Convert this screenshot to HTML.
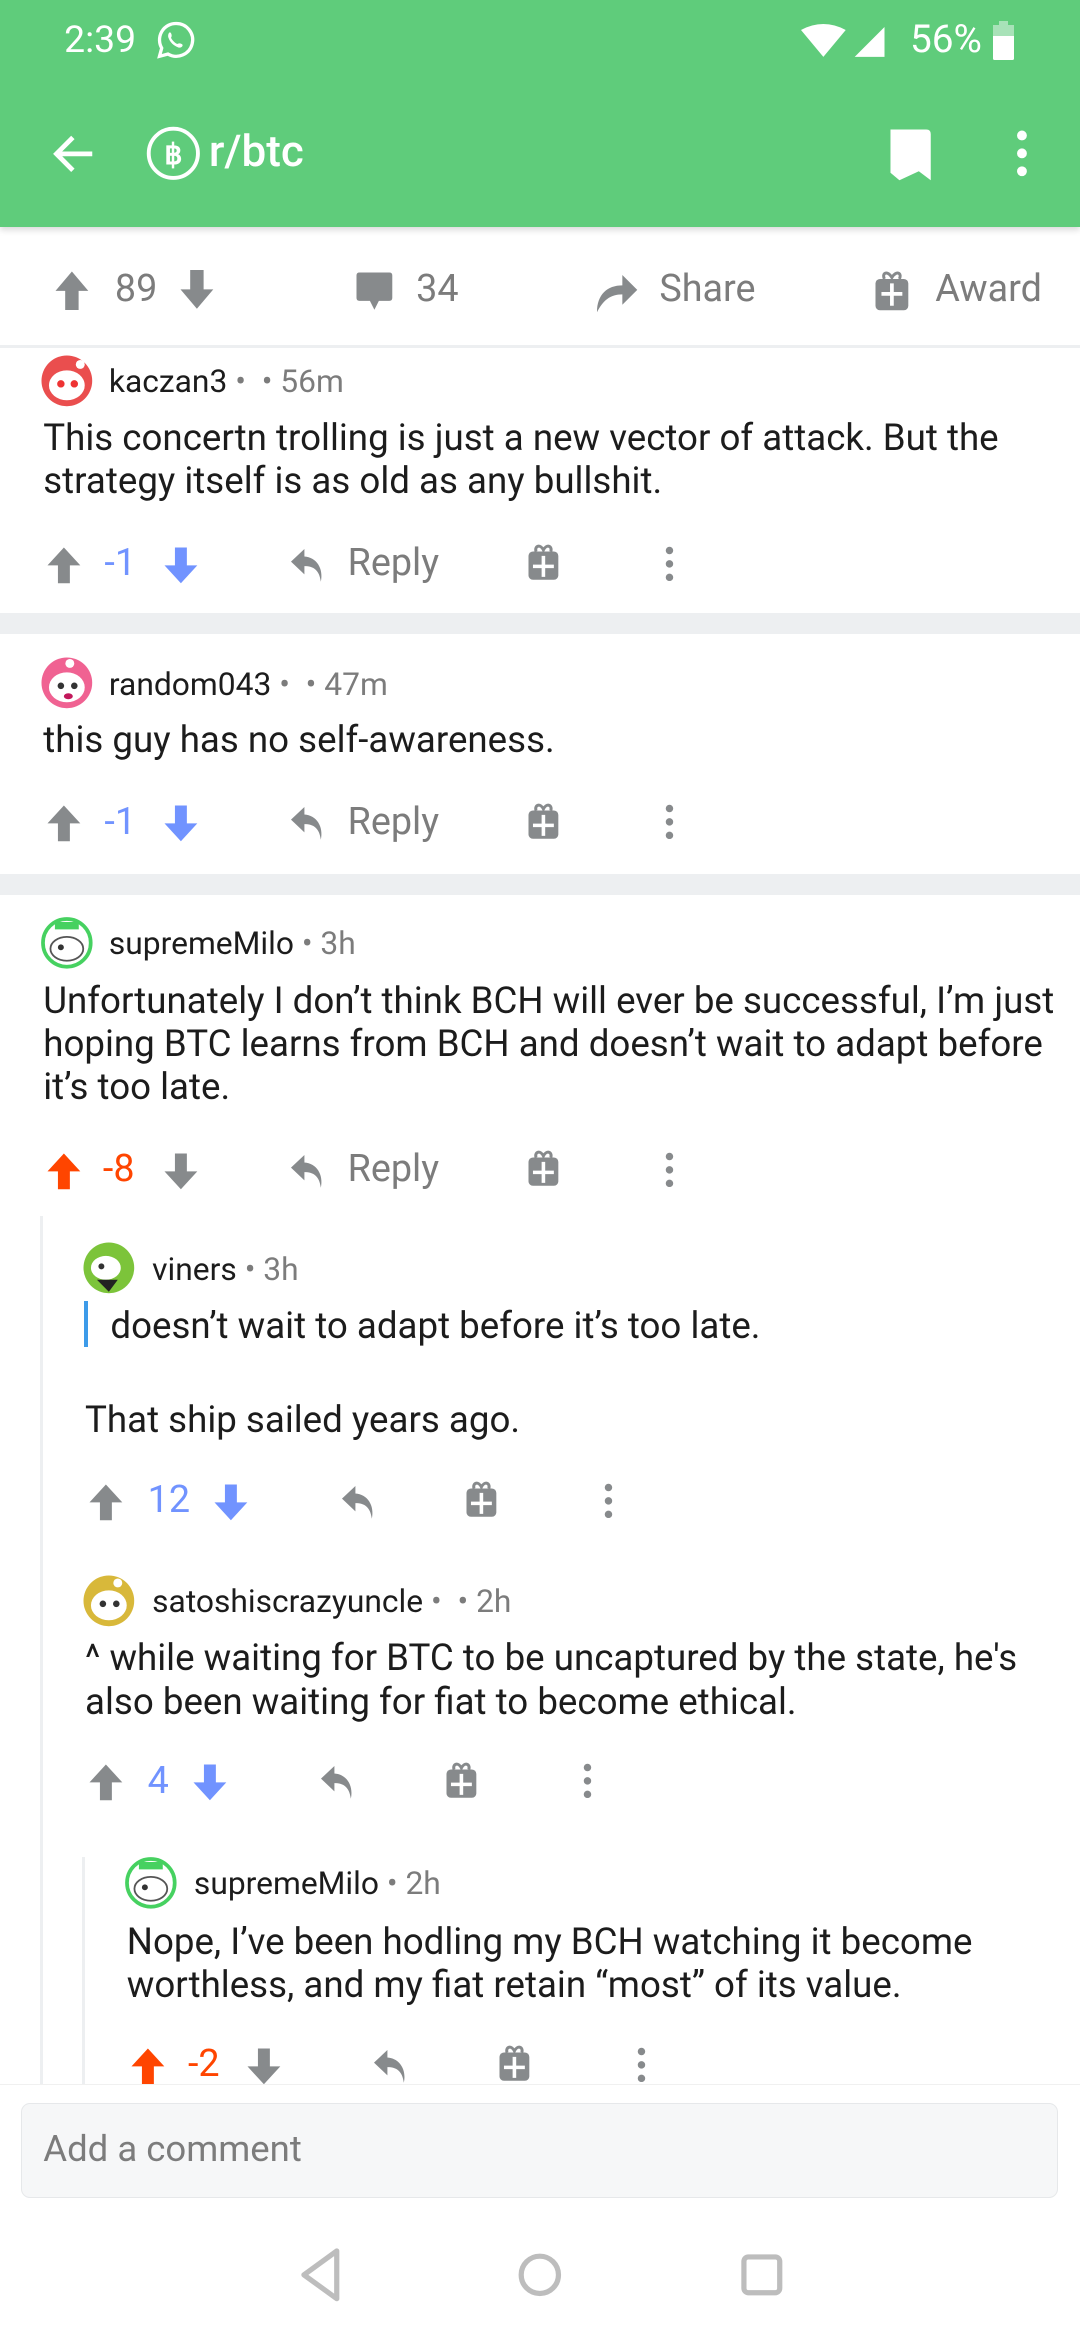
<!DOCTYPE html>
<html><head><meta charset="utf-8">
<style>
html,body{margin:0;padding:0;background:#fff;}
#w{position:relative;width:724px;height:1568px;zoom:1.49171;overflow:hidden;font-family:"Roboto","Liberation Sans",sans-serif;background:#fff;}
.a{position:absolute;white-space:nowrap;}
.t{position:absolute;font-size:24.6px;color:#1c1c1c;line-height:29px;white-space:nowrap;}
.n{position:absolute;font-size:21.3px;color:#1c1c1c;line-height:24px;white-space:nowrap;}
.n span{color:#7c7c7c;}
svg{position:absolute;}
.lab{position:absolute;font-size:25.3px;line-height:30px;color:#7c7c7c;white-space:nowrap;}
</style></head><body><div id="w">
<!-- header -->
<div class="a" style="left:0;top:0;width:724px;height:152px;background:#5fcc7b;box-shadow:0 2px 4px rgba(0,0,0,.15)"></div>
<div class="a" style="left:43px;top:12px;font-size:25px;color:#fff;line-height:30px">2:39</div>
<svg style="left:104px;top:13px" width="28" height="28" viewBox="0 0 28 28"><path d="M14 3a11 11 0 0 0-9.5 16.5L3 25l5.7-1.5A11 11 0 1 0 14 3z" fill="none" stroke="#fff" stroke-width="2.2"/><path d="M10 9c1 0 1.5 2.5 1 3 -.5.5 0 1.5 1.5 3s2.5 2 3 1.5c.5-.5 3 0 3 1 0 1.5-2 2-3 1.5-3-1-5.5-3.5-6.5-6.5-.5-1 0-3.5 1-3.5z" fill="#fff"/></svg>
<svg style="left:535px;top:16px" width="80" height="24" viewBox="0 0 80 24"><path d="M2 4Q17-4 32 4L17 22Z" fill="#fff"/><path d="M38 22L58 2V22Z" fill="#fff"/></svg>
<div class="a" style="left:610px;top:12px;font-size:26px;color:#fff;line-height:30px">56%</div>
<div class="a" style="left:666px;top:17px;width:14px;height:23px;background:#fff;border-radius:1px"></div>
<div class="a" style="left:666px;top:17px;width:14px;height:7px;background:#a8e2b8"></div>
<div class="a" style="left:670px;top:14px;width:6px;height:4px;background:#a8e2b8"></div>
<svg style="left:33px;top:87px" width="32" height="32" viewBox="0 0 32 32"><path d="M29 16H5M16 5L5 16l11 11" fill="none" stroke="#fff" stroke-width="3.2"/></svg>
<svg style="left:97px;top:84px" width="38" height="38" viewBox="0 0 38 38"><circle cx="19" cy="19" r="16.5" fill="none" stroke="#fff" stroke-width="2.6"/><text x="19" y="26" font-size="19" font-weight="bold" fill="#fff" text-anchor="middle" font-family="Liberation Sans">฿</text></svg>
<div class="a" style="left:140px;top:84px;font-size:29.5px;color:#fff;line-height:36px;font-weight:500">r/btc</div>
<svg style="left:594px;top:86px" width="32" height="36" viewBox="0 0 32 36"><path d="M3 1H27Q30 1 30 4V35L22 29L9 35L3 30Z" fill="#fff"/></svg>
<svg style="left:679px;top:86px" width="12" height="34" viewBox="0 0 12 34"><circle cx="6" cy="5" r="3.3" fill="#fff"/><circle cx="6" cy="17" r="3.3" fill="#fff"/><circle cx="6" cy="29" r="3.3" fill="#fff"/></svg>

<!-- action bar -->
<svg style="left:36px;top:181px" width="24" height="27" viewBox="0 0 24 27"><path d="M12 1L23 14H16.5V27H7.5V14H1Z" fill="#878a8c"/></svg>
<div class="lab" style="left:77px;top:179px">89</div>
<svg style="left:120px;top:181px" width="24" height="27" viewBox="0 0 24 27"><path d="M12 26L23 13H16.5V0H7.5V13H1Z" fill="#878a8c"/></svg>
<svg style="left:238px;top:182px" width="26" height="27" viewBox="0 0 26 27"><path d="M3 1H23Q25 1 25 3V18Q25 20 23 20H16L13 26L10 20H3Q1 20 1 18V3Q1 1 3 1Z" fill="#878a8c"/></svg>
<div class="lab" style="left:279px;top:179px">34</div>
<svg style="left:398px;top:180px" width="30" height="30" viewBox="0 0 30 30"><path d="M2 29C2 17 9 11 19 11V4L29 14L19 24V17C11 17 6 21 2 29Z" fill="#878a8c"/></svg>
<div class="lab" style="left:442px;top:179px">Share</div>
<svg style="left:586px;top:181px" width="24" height="28" viewBox="0 0 24 28"><rect x="1" y="6" width="22" height="21" rx="3" fill="#878a8c"/><path d="M7 6C5 2 9 0 12 5 15 0 19 2 17 6" fill="none" stroke="#878a8c" stroke-width="2"/><path d="M12 9V24M5 16H19" stroke="#fff" stroke-width="2.5"/></svg>
<div class="lab" style="left:627px;top:179px">Award</div>
<div class="a" style="left:0;top:231px;width:724px;height:2px;background:#edeff1"></div>

<!-- comment 1 -->
<svg style="left:27px;top:237px" width="36" height="36" viewBox="0 0 36 36"><circle cx="18" cy="18" r="17" fill="#ea4e4e"/><ellipse cx="18" cy="21" rx="12" ry="10" fill="#fff"/><circle cx="14" cy="20" r="2.5" fill="#e33"/><circle cx="23" cy="20" r="2.5" fill="#e33"/><circle cx="27" cy="7" r="3" fill="#fff"/></svg>
<div class="n" style="left:73px;top:244px">kaczan3 <span>•&nbsp; • 56m</span></div>
<div class="t" style="left:29px;top:279px">This concertn trolling is just a new vector of attack. But the<br>strategy itself is as old as any bullshit.</div>

<!-- comment 2 -->
<div class="a" style="left:0;top:411px;width:724px;height:14px;background:#edeff1"></div>
<svg style="left:27px;top:440px" width="36" height="36" viewBox="0 0 36 36"><circle cx="18" cy="18" r="17" fill="#f06292"/><ellipse cx="18" cy="21" rx="12" ry="10" fill="#fff"/><circle cx="14" cy="20" r="2.2" fill="#333"/><circle cx="23" cy="20" r="2.2" fill="#333"/><ellipse cx="19" cy="27" rx="3" ry="2" fill="#c2185b"/><circle cx="20" cy="5" r="3" fill="#fff"/></svg>
<div class="n" style="left:73px;top:447px">random043 <span>•&nbsp; • 47m</span></div>
<div class="t" style="left:29px;top:481px">this guy has no self-awareness.</div>

<!-- comment 3 -->
<div class="a" style="left:0;top:586px;width:724px;height:14px;background:#edeff1"></div>
<svg style="left:27px;top:614px" width="36" height="36" viewBox="0 0 36 36"><circle cx="18" cy="18" r="16" fill="#fff" stroke="#46d160" stroke-width="2.5"/><ellipse cx="18" cy="22" rx="11" ry="8" fill="#fff" stroke="#555" stroke-width="1.2"/><circle cx="14" cy="21" r="2" fill="#333"/><path d="M10 4h16v5H10z" fill="#46d160"/></svg>
<div class="n" style="left:73px;top:621px">supremeMilo <span>• 3h</span></div>
<div class="t" style="left:29px;top:656px">Unfortunately I don’t think BCH will ever be successful, I’m just<br>hoping BTC learns from BCH and doesn’t wait to adapt before<br>it’s too late.</div>

<!-- nested -->
<div class="a" style="left:27px;top:815px;width:2px;height:582px;background:#edeff1"></div>
<svg style="left:55px;top:832px" width="36" height="36" viewBox="0 0 36 36"><circle cx="18" cy="18" r="17" fill="#7cc43a"/><ellipse cx="16" cy="18" rx="10" ry="8" fill="#fff"/><circle cx="13" cy="17" r="2" fill="#333"/><path d="M10 26l8 8 6-8z" fill="#222"/></svg>
<div class="n" style="left:102px;top:839px">viners <span>• 3h</span></div>
<div class="a" style="left:56px;top:872px;width:3px;height:31px;background:#3d9be9"></div>
<div class="t" style="left:74px;top:874px">doesn’t wait to adapt before it’s too late.</div>
<div class="t" style="left:57px;top:937px">That ship sailed years ago.</div>

<svg style="left:55px;top:1055px" width="36" height="36" viewBox="0 0 36 36"><circle cx="18" cy="18" r="17" fill="#d8b83a"/><ellipse cx="18" cy="21" rx="12" ry="10" fill="#fff"/><circle cx="14" cy="20" r="2.2" fill="#333"/><circle cx="23" cy="20" r="2.2" fill="#333"/><circle cx="24" cy="6" r="3" fill="#fff"/></svg>
<div class="n" style="left:102px;top:1062px">satoshiscrazyuncle <span>•&nbsp; • 2h</span></div>
<div class="t" style="left:57px;top:1097px">^ while waiting for BTC to be uncaptured by the state, he's<br>also been waiting for fiat to become ethical.</div>

<div class="a" style="left:55px;top:1245px;width:2px;height:152px;background:#edeff1"></div>
<svg style="left:83px;top:1244px" width="36" height="36" viewBox="0 0 36 36"><circle cx="18" cy="18" r="16" fill="#fff" stroke="#46d160" stroke-width="2.5"/><ellipse cx="18" cy="22" rx="11" ry="8" fill="#fff" stroke="#555" stroke-width="1.2"/><circle cx="14" cy="21" r="2" fill="#333"/><path d="M10 4h16v5H10z" fill="#46d160"/></svg>
<div class="n" style="left:130px;top:1251px">supremeMilo <span>• 2h</span></div>
<div class="t" style="left:85px;top:1287px">Nope, I’ve been hodling my BCH watching it become<br>worthless, and my fiat retain “most” of its value.</div>

<svg width="0" height="0" style="position:absolute"><defs>
<path id="up" d="M12 1L23 13H16V25H8V13H1Z"/>
<path id="dn" d="M12 25L23 13H16V1H8V13H1Z"/>
<path id="rp" d="M11 7V2L2 10.5L11 19V13.5C17 13.5 21 16 22 24 24 15 19 7.5 11 7Z"/>
<g id="gf"><rect x="1" y="5" width="20" height="19" rx="3" fill="#878a8c"/><path d="M6 5C5 1 9 0 11 4 13 0 17 1 16 5" fill="none" stroke="#878a8c" stroke-width="2"/><path d="M11 8V22M4 15H18" stroke="#fff" stroke-width="2.4"/></g>
<g id="dt" fill="#878a8c"><circle cx="3" cy="3" r="2.5"/><circle cx="3" cy="12" r="2.5"/><circle cx="3" cy="21" r="2.5"/></g>
</defs></svg>

<!-- row 1 -->
<svg style="left:31px;top:366px" width="24" height="26"><use href="#up" fill="#878a8c"/></svg>
<div class="lab" style="left:70px;top:363px;color:#7193ff">-1</div>
<svg style="left:109px;top:366px" width="24" height="26"><use href="#dn" fill="#7193ff"/></svg>
<svg style="left:193px;top:366px" width="26" height="26"><use href="#rp" fill="#878a8c"/></svg>
<div class="lab" style="left:233px;top:363px">Reply</div>
<svg style="left:353px;top:365px" width="24" height="26"><use href="#gf"/></svg>
<svg style="left:446px;top:366px" width="8" height="26"><use href="#dt"/></svg>

<!-- row 2 -->
<svg style="left:31px;top:539px" width="24" height="26"><use href="#up" fill="#878a8c"/></svg>
<div class="lab" style="left:70px;top:536px;color:#7193ff">-1</div>
<svg style="left:109px;top:539px" width="24" height="26"><use href="#dn" fill="#7193ff"/></svg>
<svg style="left:193px;top:539px" width="26" height="26"><use href="#rp" fill="#878a8c"/></svg>
<div class="lab" style="left:233px;top:536px">Reply</div>
<svg style="left:353px;top:538px" width="24" height="26"><use href="#gf"/></svg>
<svg style="left:446px;top:539px" width="8" height="26"><use href="#dt"/></svg>

<!-- row 3 -->
<svg style="left:31px;top:772px" width="24" height="26"><use href="#up" fill="#ff4500"/></svg>
<div class="lab" style="left:69px;top:769px;color:#ff4500">-8</div>
<svg style="left:109px;top:772px" width="24" height="26"><use href="#dn" fill="#878a8c"/></svg>
<svg style="left:193px;top:772px" width="26" height="26"><use href="#rp" fill="#878a8c"/></svg>
<div class="lab" style="left:233px;top:769px">Reply</div>
<svg style="left:353px;top:771px" width="24" height="26"><use href="#gf"/></svg>
<svg style="left:446px;top:772px" width="8" height="26"><use href="#dt"/></svg>

<!-- row 4 -->
<svg style="left:59px;top:994px" width="24" height="26"><use href="#up" fill="#878a8c"/></svg>
<div class="lab" style="left:99px;top:991px;color:#7193ff">12</div>
<svg style="left:143px;top:994px" width="24" height="26"><use href="#dn" fill="#7193ff"/></svg>
<svg style="left:227px;top:994px" width="26" height="26"><use href="#rp" fill="#878a8c"/></svg>
<svg style="left:312px;top:993px" width="24" height="26"><use href="#gf"/></svg>
<svg style="left:405px;top:994px" width="8" height="26"><use href="#dt"/></svg>

<!-- row 5 -->
<svg style="left:59px;top:1182px" width="24" height="26"><use href="#up" fill="#878a8c"/></svg>
<div class="lab" style="left:99px;top:1179px;color:#7193ff">4</div>
<svg style="left:129px;top:1182px" width="24" height="26"><use href="#dn" fill="#7193ff"/></svg>
<svg style="left:213px;top:1182px" width="26" height="26"><use href="#rp" fill="#878a8c"/></svg>
<svg style="left:298px;top:1181px" width="24" height="26"><use href="#gf"/></svg>
<svg style="left:391px;top:1182px" width="8" height="26"><use href="#dt"/></svg>

<!-- row 6 -->
<svg style="left:87px;top:1372px" width="24" height="26"><use href="#up" fill="#ff4500"/></svg>
<div class="lab" style="left:126px;top:1369px;color:#ff4500">-2</div>
<svg style="left:165px;top:1372px" width="24" height="26"><use href="#dn" fill="#878a8c"/></svg>
<svg style="left:249px;top:1372px" width="26" height="26"><use href="#rp" fill="#878a8c"/></svg>
<svg style="left:334px;top:1371px" width="24" height="26"><use href="#gf"/></svg>
<svg style="left:427px;top:1372px" width="8" height="26"><use href="#dt"/></svg>

<!-- bottom -->
<div class="a" style="left:0;top:1397px;width:724px;height:171px;background:#fff;border-top:1px solid #f0f0f0"></div>
<div class="a" style="left:14px;top:1410px;width:694px;height:62px;background:#f6f7f8;border:1px solid #e6e8ea;border-radius:6px"></div>
<div class="a" style="left:29px;top:1426px;font-size:24.5px;line-height:30px;color:#7c7c7c">Add a comment</div>
<svg style="left:196px;top:1505px" width="40" height="40" viewBox="0 0 40 40"><path d="M30 4V36L8 20Z" fill="none" stroke="#bdbdbd" stroke-width="3.5" stroke-linejoin="round"/></svg>
<svg style="left:342px;top:1505px" width="40" height="40" viewBox="0 0 40 40"><circle cx="20" cy="20" r="12.5" fill="none" stroke="#bdbdbd" stroke-width="3.5"/></svg>
<svg style="left:491px;top:1505px" width="40" height="40" viewBox="0 0 40 40"><rect x="8" y="8" width="24" height="24" rx="3" fill="none" stroke="#bdbdbd" stroke-width="3.5"/></svg>
</div></body></html>
